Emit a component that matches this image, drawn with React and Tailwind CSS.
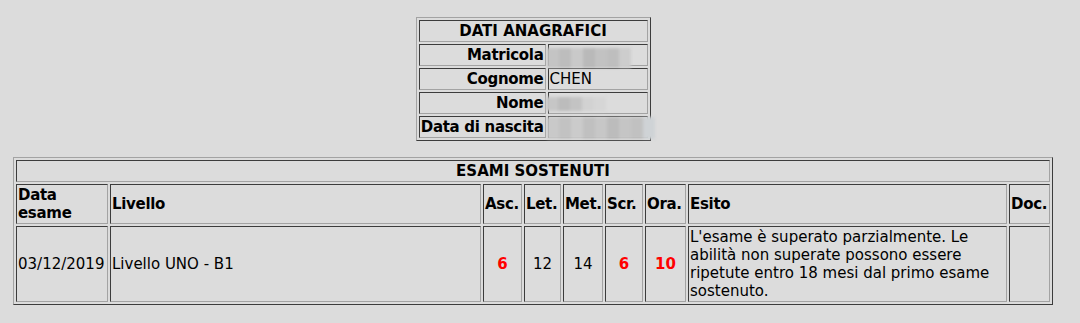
import React from 'react';

const font = { fontFamily: '"DejaVu Sans", Verdana, sans-serif' };

// raised frame of the table, sunken frame of every cell
const tableCls =
  'border-separate border-spacing-[2px] border border-t-[#a3a3a3] border-l-[#a3a3a3] border-b-[#3c3c3c] border-r-[#3c3c3c]';
const cellCls =
  'border border-t-[#3c3c3c] border-l-[#3c3c3c] border-b-[#a3a3a3] border-r-[#a3a3a3] p-[1px] leading-[18px]';

// pixelated, smeared patch hiding a private value
function Hidden({ tiles, className }) {
  return (
    <div className={'flex blur-[1.5px] ' + className}>
      {tiles.map((c, i) => (
        <div key={i} className="h-full w-[12px] shrink-0" style={{ backgroundColor: c }} />
      ))}
    </div>
  );
}

const personal = [
  {
    label: 'Matricola',
    value: (
      <Hidden
        className="-ml-[3px] mt-[2px] -mb-[4px] h-[20px]"
        tiles={['#c4c4c4', '#bdbdbd', '#c9c9c9', '#b9b9b9', '#c2c2c2', '#bebebe', '#cdcdcd']}
      />
    ),
  },
  { label: 'Cognome', value: 'CHEN' },
  {
    label: 'Nome',
    value: (
      <Hidden
        className="-ml-[4px] mt-[3px] mb-[1px] h-[14px]"
        tiles={['#c6c6c6', '#bcbcbc', '#c3c3c3', '#d2d2d2', '#d6d6d6']}
      />
    ),
  },
  {
    label: 'Data di nascita',
    value: (
      <Hidden
        className="-ml-[3px] -mt-[1px] -mb-[3px] h-[22px]"
        tiles={['#c9c9c9', '#c2c2c2', '#cbcbcb', '#c0c0c0', '#c7c7c7', '#bcbcbc', '#c5c5c5', '#c1c1c1', '#cfd3d6']}
      />
    ),
  },
];

const cols = [
  { key: 'data', title: 'Data esame', w: 'w-[92px]' },
  { key: 'livello', title: 'Livello', w: 'w-[371px]' },
  { key: 'asc', title: 'Asc.', w: 'w-[39px]' },
  { key: 'let', title: 'Let.', w: 'w-[37px]' },
  { key: 'met', title: 'Met.', w: 'w-[40px]' },
  { key: 'scr', title: 'Scr.', w: 'w-[38px]' },
  { key: 'ora', title: 'Ora.', w: 'w-[41px]' },
  { key: 'esito', title: 'Esito', w: 'w-[319px]' },
  { key: 'doc', title: 'Doc.', w: 'w-[41px]' },
];

const exam = {
  data: '03/12/2019',
  livello: 'Livello UNO - B1',
  scores: [
    { v: 6, fail: true },
    { v: 12 },
    { v: 14 },
    { v: 6, fail: true },
    { v: 10, fail: true },
  ],
  esito:
    "L'esame è superato parzialmente. Le abilità non superate possono essere ripetute entro 18 mesi dal primo esame sostenuto.",
};

export default function App() {
  return (
    <div className="min-h-[323px] bg-[#dcdcdc] text-black text-[15px]" style={font}>
      <div className="w-[1066px] flex flex-col items-center pt-[17px]">
        <table className={tableCls + ' w-[235px] table-fixed'}>
          <colgroup>
            <col className="w-[127px]" />
            <col className="w-[100px]" />
          </colgroup>
          <tbody>
            <tr>
              <th colSpan={2} className={cellCls + ' text-center font-bold'}>
                DATI ANAGRAFICI
              </th>
            </tr>
            {personal.map((r) => (
              <tr key={r.label}>
                <th className={cellCls + ' text-right font-bold whitespace-nowrap tracking-[-0.3px]'}>{r.label}</th>
                <td className={cellCls + ' text-left align-top'}>{r.value}</td>
              </tr>
            ))}
          </tbody>
        </table>

        <table className={tableCls + ' w-[1040px] table-fixed mt-[16px]'}>
          <colgroup>
            {cols.map((c) => (
              <col key={c.key} className={c.w} />
            ))}
          </colgroup>
          <tbody>
            <tr>
              <th colSpan={9} className={cellCls + ' text-center font-bold'}>
                ESAMI SOSTENUTI
              </th>
            </tr>
            <tr>
              {cols.map((c) => (
                <th
                  key={c.key}
                  className={cellCls + ' text-left font-bold align-middle whitespace-nowrap tracking-[-0.3px]'}
                >
                  {c.key === 'data' ? (
                    <>
                      Data
                      <br />
                      esame
                    </>
                  ) : (
                    c.title
                  )}
                </th>
              ))}
            </tr>
            <tr>
              <td className={cellCls + ' align-middle'}>{exam.data}</td>
              <td className={cellCls + ' align-middle'}>{exam.livello}</td>
              {exam.scores.map((s, i) => (
                <td
                  key={i}
                  className={cellCls + ' text-center align-middle ' + (s.fail ? 'text-[#ff0000] font-bold' : '')}
                >
                  {s.v}
                </td>
              ))}
              <td className={cellCls + ' align-middle'}>{exam.esito}</td>
              <td className={cellCls}></td>
            </tr>
          </tbody>
        </table>
      </div>
    </div>
  );
}
